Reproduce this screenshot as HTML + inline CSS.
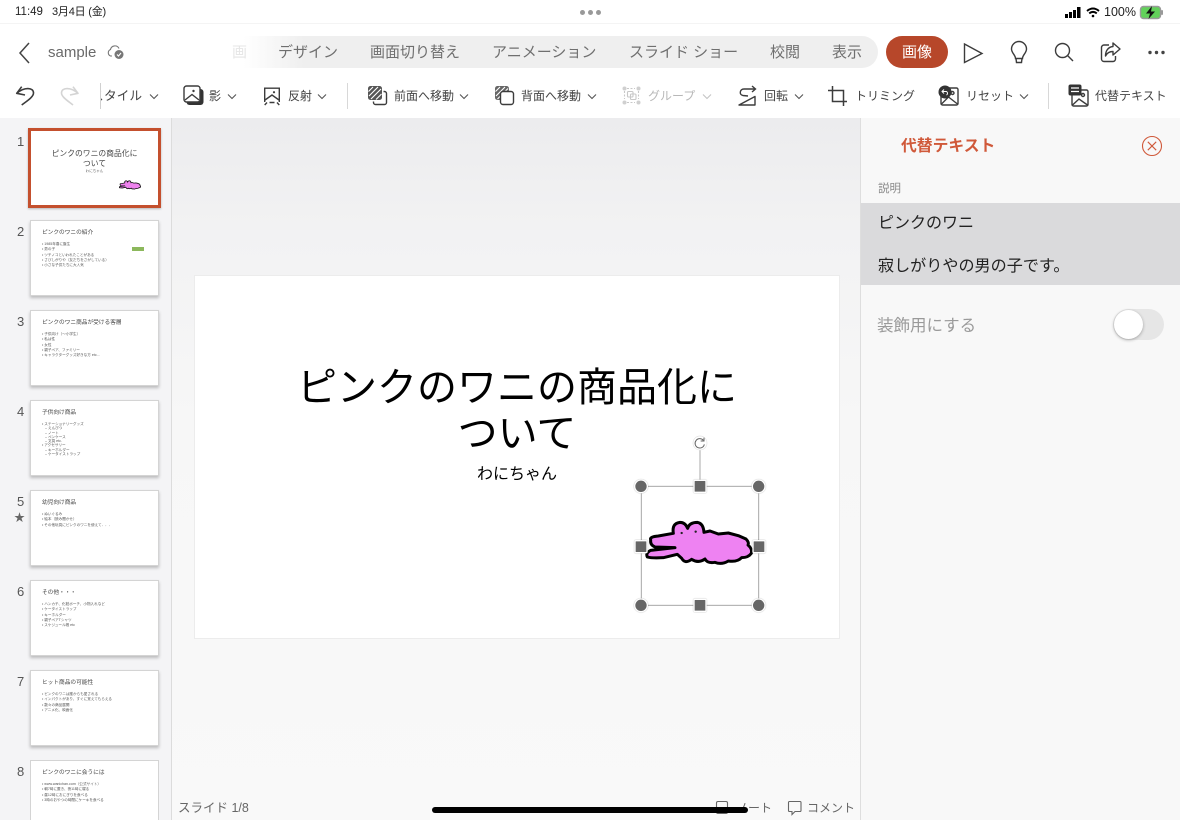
<!DOCTYPE html>
<html lang="ja"><head><meta charset="utf-8"><style>
*{box-sizing:border-box}
html,body{margin:0;padding:0;width:1180px;height:820px;overflow:hidden}
body{background:#fff;font-family:"Liberation Sans","Noto Sans CJK JP",sans-serif;color:#444}
#w{position:absolute;left:0;top:0;width:1180px;height:820px;overflow:hidden;background:#fff}
.t{position:absolute;white-space:nowrap;line-height:1}
.tab{font-size:15px;color:#6f6f6f;top:45px}
.tb{font-size:12px;color:#444;top:90px}
svg.i{position:absolute;overflow:visible;fill:none;stroke:#3c3c3c;stroke-width:1.4}
.th{position:absolute;left:31px;width:127px;height:74px;background:#fff;box-shadow:0 0 0 1px #d4d4d4,0 2px 3px 1px rgba(0,0,0,.24)}
.n{position:absolute;left:17px;font-size:13px;color:#555}
.th b{position:absolute;left:11px;top:10px;font-weight:400;font-size:5.7px;color:#444;white-space:nowrap;line-height:1}
.th div{position:absolute;left:11px;top:21px;font-size:3.6px;line-height:5.3px;color:#555;white-space:nowrap}
</style></head><body><div id="w">
<!-- status bar -->
<div class="t" style="left:15px;top:7px;font-size:11.5px;color:#222">11:49</div>
<div class="t" style="left:52px;top:7px;font-size:11px;color:#222;letter-spacing:-.2px">3月4日 (金)</div>
<div style="position:absolute;left:580px;top:10px;width:5px;height:5px;border-radius:50%;background:#999"></div>
<div style="position:absolute;left:588px;top:10px;width:5px;height:5px;border-radius:50%;background:#999"></div>
<div style="position:absolute;left:596px;top:10px;width:5px;height:5px;border-radius:50%;background:#999"></div>
<svg class="i" style="left:1065px;top:7px;stroke:none;fill:#000" width="16" height="11"><rect x="0" y="7" width="3" height="4"/><rect x="4" y="5" width="3" height="6"/><rect x="8" y="3" width="3" height="8"/><rect x="12" y="0" width="3.500" height="11"/></svg>
<svg class="i" style="left:1086px;top:7px;stroke:#000;stroke-width:1.9" width="14" height="11"><path d="M1 4Q7-1 13 4M3.200 6.400Q7 3.400 10.800 6.400"/><circle cx="7" cy="9" r="1.300" fill="#000" stroke="none"/></svg>
<div class="t" style="left:1104px;top:6px;font-size:12.500px;color:#222">100%</div>
<svg class="i" style="left:1140px;top:6px;stroke:none" width="24" height="13"><rect x=".5" y=".5" width="20" height="12" rx="3" fill="#62d15a" stroke="#9a9a9a"/><rect x="21" y="4" width="2" height="5" rx="1" fill="#999"/><path d="M12 0L6 7.500H10L8.500 13L15 5.500H11Z" fill="#111"/></svg>
<div style="position:absolute;left:0;top:23px;width:1180px;height:1px;background:#f4f4f4"></div>

<!-- title row -->
<svg class="i" style="left:17px;top:42px;stroke:#444;stroke-width:1.500" width="14" height="22"><path d="M12 1L3 11L12 21"/></svg>
<div class="t" style="left:48px;top:45px;font-size:15px;color:#6a6a6a">sample</div>
<svg class="i" style="left:106px;top:44px;stroke:#777;stroke-width:1.100" width="20" height="17"><path d="M6 12H4.500A3.500 3.500 0 0 1 4.500 5.500A4.500 4.500 0 0 1 13 4.500"/><circle cx="13" cy="10.500" r="4.500" fill="#777" stroke="none"/><path d="M11 10.500L12.500 12L15 9" stroke="#fff"/></svg>
<div style="position:absolute;left:210px;top:36px;width:668px;height:32px;border-radius:16px;background:linear-gradient(90deg,#fff 0,#fff 5%,#efefef 14%,#efefef 100%)"></div>
<div class="t tab" style="left:232px;color:#e6e6e6">画</div>
<div class="t tab" style="left:278px">デザイン</div>
<div class="t tab" style="left:370px">画面切り替え</div>
<div class="t tab" style="left:492px">アニメーション</div>
<div class="t tab" style="left:629px">スライド ショー</div>
<div class="t tab" style="left:770px">校閲</div>
<div class="t tab" style="left:832px">表示</div>
<div style="position:absolute;left:886px;top:36px;width:62px;height:32px;border-radius:16px;background:#b7472a"></div>
<div class="t" style="left:902px;top:45px;font-size:15px;color:#fff">画像</div>
<svg class="i" style="left:960px;top:40px" width="26" height="26"><path d="M4.500 4L22 13.500L4.500 22.500Z"/></svg>
<svg class="i" style="left:1008px;top:41px" width="22" height="24"><path d="M7.500 17.500C7.500 14 3.500 12 3.500 8A7.500 7.500 0 0 1 18.500 8C18.500 12 14.500 14 14.500 17.500ZM8 17.500L8.500 21.500H13.500L14 17.500"/></svg>
<svg class="i" style="left:1054px;top:42px" width="20" height="20"><circle cx="8.500" cy="8.500" r="7"/><path d="M13.500 13.500L19 19"/></svg>
<svg class="i" style="left:1100px;top:41px" width="22" height="22"><path d="M9 4H4A2.500 2.500 0 0 0 1.500 6.500V18A2.500 2.500 0 0 0 4 20.500H13A2.500 2.500 0 0 0 15.500 18V15"/><path d="M13 2L20 8L13 14V10.500C9 10.500 7 12 5.500 15C5.500 10 8 6 13 5.500Z" stroke-linejoin="round"/></svg>
<svg class="i" style="left:1148px;top:50px;stroke:none;fill:#444" width="18" height="5"><circle cx="2" cy="2.500" r="1.700"/><circle cx="8.500" cy="2.500" r="1.700"/><circle cx="15" cy="2.500" r="1.700"/></svg>

<!-- toolbar -->
<svg class="i" style="left:14px;top:84px;stroke-width:1.600" width="22" height="24"><path d="M7.700 2.700L2.700 9.300L11 11M2.700 9.300C10 3 19.500 3 19.500 9C19.500 13 13 17 7.700 21" stroke-linejoin="round"/></svg>
<svg class="i" style="left:59px;top:84px;stroke:#d4d4d4;stroke-width:1.600" width="22" height="24"><path d="M14 2.700L19 9.300L11 11M19 9.300C12 3 2.500 3 2.500 9C2.500 13 9 17 14 21" stroke-linejoin="round"/></svg>
<div style="position:absolute;left:100px;top:83px;width:1px;height:26px;background:#d0d0d0"></div>
<div style="position:absolute;left:101px;top:88px;width:3px;height:16px;overflow:hidden"><div class="t" style="left:-10px;top:2px;font-size:12.700px;color:#444">ス</div></div>
<div class="t tb" style="left:104px;font-size:12.700px">タイル</div>
<svg class="i" style="left:149px;top:93px;stroke:#555;stroke-width:1.100" width="10" height="7"><path d="M1 1.500L5 5.500L9 1.500"/></svg>

<svg class="i" style="left:183px;top:85px" width="22" height="21"><rect x="3.500" y="4" width="17" height="16" rx="3" fill="#333" stroke="none"/><rect x="1" y="1" width="16" height="16" rx="2.500" fill="#fff"/><circle cx="10.500" cy="6" r="1.200" fill="#3c3c3c" stroke="none"/><path d="M2 15L9 9.500L16 15"/></svg>
<div class="t tb" style="left:209px">影</div>
<svg class="i" style="left:227px;top:93px;stroke:#555;stroke-width:1.100" width="10" height="7"><path d="M1 1.500L5 5.500L9 1.500"/></svg>

<svg class="i" style="left:264px;top:87px" width="16" height="19"><path d="M.700 15V1.200H15.300V15"/><circle cx="10" cy="5.200" r="1.100" fill="#3c3c3c" stroke="none"/><path d="M1 13L8 8L15 13M.700 18L3 15.500M15.300 18L13 15.500M5.500 15.500H10.500"/></svg>
<div class="t tb" style="left:288px">反射</div>
<svg class="i" style="left:317px;top:93px;stroke:#555;stroke-width:1.100" width="10" height="7"><path d="M1 1.500L5 5.500L9 1.500"/></svg>
<div style="position:absolute;left:347px;top:83px;width:1px;height:26px;background:#d8d8d8"></div>

<svg class="i" style="left:367px;top:85px" width="22" height="22"><rect x="1" y="1" width="14" height="14" rx="2.500" fill="#555" stroke="none"/><path d="M2 11L11 2M4 14L14 4M1.500 6.500L6 2M9 14.500L14.500 9" stroke="#fff" stroke-width="1.100"/><path d="M16.500 6.500H17.500A2 2 0 0 1 19.500 8.500V17.500A2 2 0 0 1 17.500 19.500H8.500A2 2 0 0 1 6.500 17.500V16.500"/></svg>
<div class="t tb" style="left:394px">前面へ移動</div>
<svg class="i" style="left:459px;top:93px;stroke:#555;stroke-width:1.100" width="10" height="7"><path d="M1 1.500L5 5.500L9 1.500"/></svg>

<svg class="i" style="left:494px;top:85px" width="22" height="22"><rect x="1" y="1" width="14" height="14" rx="2.500" fill="#666" stroke="none"/><path d="M2 11L11 2M3.500 14L14 3.500M1.500 6.500L6 2" stroke="#fff" stroke-width="1.100"/><rect x="6.500" y="6.500" width="13" height="13" rx="2.500" fill="#fff"/></svg>
<div class="t tb" style="left:521px">背面へ移動</div>
<svg class="i" style="left:587px;top:93px;stroke:#555;stroke-width:1.100" width="10" height="7"><path d="M1 1.500L5 5.500L9 1.500"/></svg>

<svg class="i" style="left:622px;top:86px;stroke:#c8c8c8;stroke-width:1.100" width="19" height="19"><path d="M5 2.500H13M5 16.500H13M2.500 5V13M16.500 5V13" stroke-dasharray="2 1.500"/><rect x="5.500" y="5.500" width="5.500" height="5.500" rx="1"/><rect x="8.500" y="8" width="5.500" height="5.500" rx="1"/><g fill="#d0d0d0" stroke="none"><circle cx="2.500" cy="2.500" r="2"/><circle cx="16.500" cy="2.500" r="2"/><circle cx="2.500" cy="16.500" r="2"/><circle cx="16.500" cy="16.500" r="2"/></g></svg>
<div class="t tb" style="left:648px;color:#b8b8b8">グループ</div>
<svg class="i" style="left:702px;top:93px;stroke:#c4c4c4;stroke-width:1.100" width="10" height="7"><path d="M1 1.500L5 5.500L9 1.500"/></svg>

<svg class="i" style="left:738px;top:85px;stroke-width:1.400" width="19" height="21"><path d="M14 1L17.500 4L14 7M17 4H6C1.500 4 1 10 5 10.500L10 11"/><path d="M1 20H17V11.500Z" stroke-linejoin="round"/></svg>
<div class="t tb" style="left:764px">回転</div>
<svg class="i" style="left:794px;top:93px;stroke:#555;stroke-width:1.100" width="10" height="7"><path d="M1 1.500L5 5.500L9 1.500"/></svg>

<svg class="i" style="left:828px;top:86px;stroke-width:1.500" width="19" height="20"><path d="M4.500 0V15.500H19M0 4.500H15.500V20"/></svg>
<div class="t tb" style="left:855px">トリミング</div>

<svg class="i" style="left:938px;top:85px" width="22" height="22"><rect x="3" y="3" width="17" height="17" rx="1.500"/><circle cx="14.500" cy="8" r="1.500"/><path d="M3.500 19L10.500 12L19.500 19"/><circle cx="7" cy="7" r="6.500" fill="#333" stroke="none"/><path d="M4 6.500H8.500A2 2 0 0 1 8.500 10M6 4.500L4 6.500L6 8.500" stroke="#fff" stroke-width="1"/></svg>
<div class="t tb" style="left:966px">リセット</div>
<svg class="i" style="left:1019px;top:93px;stroke:#555;stroke-width:1.100" width="10" height="7"><path d="M1 1.500L5 5.500L9 1.500"/></svg>
<div style="position:absolute;left:1048px;top:83px;width:1px;height:26px;background:#d8d8d8"></div>

<svg class="i" style="left:1068px;top:84px" width="22" height="23"><rect x="4" y="6" width="16" height="16" rx="1.500"/><circle cx="15" cy="11" r="1.500"/><path d="M4.500 21L11 15L19.500 21"/><rect x="0.500" y="0.500" width="13" height="11" rx="2" fill="#333" stroke="none"/><path d="M3 4H11M3 7.500H11" stroke="#fff" stroke-width="1.300"/></svg>
<div class="t tb" style="left:1095px">代替テキスト</div>

<!-- left pane -->
<div style="position:absolute;left:0;top:118px;width:171px;height:702px;background:#f4f4f6"></div>
<div style="position:absolute;left:171px;top:118px;width:1px;height:702px;background:#dcdcdc"></div>
<div style="position:absolute;left:172px;top:118px;width:688px;height:702px;background:linear-gradient(#ececee 0,#f2f2f3 110px,#f7f7f7 300px,#f9f9f9 100%)"></div>
<div style="position:absolute;left:860px;top:118px;width:320px;height:702px;background:#f8f8f8;border-left:1px solid #dedede"></div>

<div class="n" style="top:134px">1</div>
<div style="position:absolute;left:28px;top:128px;width:133px;height:80px;background:#fff;border:3px solid #c4502e;box-shadow:0 1px 2px rgba(0,0,0,.25)"></div>
<div class="t" style="left:31px;width:127px;text-align:center;top:149px;font-size:7.800px;line-height:10px;color:#444;white-space:normal">ピンクのワニの商品化に<br>ついて</div>
<div class="t" style="left:31px;width:127px;text-align:center;top:170px;font-size:3.500px;color:#666">わにちゃん</div>
<svg style="position:absolute;left:119px;top:179px" width="22" height="12" viewBox="75 285 325 140"><path d="M92 345Q88 335 115 333L160 325Q155 295 180 292Q196 292 203 310Q208 292 232 292Q250 295 252 322L270 318L295 327L325 324L355 332L378 342Q388 352 384 360Q398 372 394 385Q385 398 365 398Q352 412 325 408Q305 420 285 412Q262 416 255 402Q235 416 215 403Q195 418 185 400L172 388L130 398Q95 400 82 396Q76 384 92 376L165 368L105 366Q90 360 92 345Z" fill="#ee82ee" stroke="#111" stroke-width="12"/></svg>

<div class="n" style="top:224px">2</div>
<div class="th" style="top:221px"><b>ピンクのワニの紹介</b><div>• 1985年春に誕生<br>• 男の子<br>• ツチノコといわれたことがある<br>• さびしがりや（友だちをさがしている）<br>• 小さな子供たちに大人気</div><span style="position:absolute;left:101px;top:26px;width:12px;height:4px;background:#8cb85c"></span></div>

<div class="n" style="top:314px">3</div>
<div class="th" style="top:311px"><b>ピンクのワニ商品が受ける客層</b><div>• 子供向け（〜小学生）<br>• 私は性<br>• 女性<br>• 親子ペア、ファミリー<br>• キャラクターグッズ好きな方 etc...</div></div>

<div class="n" style="top:404px">4</div>
<div class="th" style="top:401px"><b>子供向け商品</b><div style="line-height:4.300px">• ステーショナリーグッズ<br>&nbsp;&nbsp;&nbsp;– えんぴつ<br>&nbsp;&nbsp;&nbsp;– ノート<br>&nbsp;&nbsp;&nbsp;– ペンケース<br>&nbsp;&nbsp;&nbsp;– 文具 etc.<br>• アクセサリー<br>&nbsp;&nbsp;&nbsp;– キーホルダー<br>&nbsp;&nbsp;&nbsp;– ケータイストラップ</div></div>

<div class="n" style="top:494px">5</div>
<div class="t" style="left:14px;top:513px;font-size:11px;color:#666">★</div>
<div class="th" style="top:491px"><b>幼児向け商品</b><div>• ぬいぐるみ<br>• 絵本（読み聞かせ）<br>• その他玩具にピンクのワニを使えて．．．</div></div>

<div class="n" style="top:584px">6</div>
<div class="th" style="top:581px"><b>その他・・・</b><div>• ハンカチ、化粧ポーチ、小物入れなど<br>• ケータイストラップ<br>• キーホルダー<br>• 親子ペアTシャツ<br>• スケジュール帳 etc</div></div>

<div class="n" style="top:674px">7</div>
<div class="th" style="top:671px"><b>ヒット商品の可能性</b><div>• ピンクのワニは誰からも愛される<br>• インパクトがあり、すぐに覚えてもらえる<br>• 数々の商品展開<br>• アニメ化、映画化</div></div>

<div class="n" style="top:764px">8</div>
<div class="th" style="top:761px;height:59px;box-shadow:0 0 0 1px #d4d4d4;overflow:hidden"><b>ピンクのワニに会うには</b><div>• www.wanichan.com（公式サイト）<br>• 朝7時に置き、夜11時に寝る<br>• 昼12時におにぎりを食べる<br>• 3時のおやつの時間にケーキを食べる</div></div>

<!-- slide -->
<div style="position:absolute;left:195px;top:276px;width:644px;height:362px;background:#fff;box-shadow:0 0 0 1px #ececec"></div>
<div class="t" style="left:195px;width:644px;top:361px;text-align:center;font-size:40px;line-height:46px;color:#000;font-family:'Noto Sans CJK JP',sans-serif;white-space:normal">ピンクのワニの商品化に<br>ついて</div>
<div class="t" style="left:195px;width:644px;top:467px;text-align:center;font-size:16px;color:#000">わにちゃん</div>

<svg style="position:absolute;left:620px;top:425px" width="160" height="195" viewBox="0 0 480 585">
<g stroke="#a8a8a8" stroke-width="3" fill="none"><path d="M240 55V184"/><rect x="64" y="184" width="352" height="357"/></g>
<path d="M92 345Q88 335 115 333L160 325Q155 295 180 292Q196 292 203 310Q208 292 232 292Q250 295 252 322L270 318L295 327L325 324L355 332L378 342Q388 352 384 360Q398 372 394 385Q385 398 365 398Q352 412 325 408Q305 420 285 412Q262 416 255 402Q235 416 215 403Q195 418 185 400L172 388L130 398Q95 400 82 396Q76 384 92 376L165 368L105 366Q90 360 92 345Z" fill="#ee82f2" stroke="#000" stroke-width="9" stroke-linejoin="round"/>
<circle cx="185" cy="324" r="3.500" fill="#222"/><circle cx="227" cy="320" r="3.500" fill="#222"/>
<g fill="#666" stroke="#fff" stroke-width="4" style="filter:drop-shadow(0 0 1.500px rgba(0,0,0,.35))">
<circle cx="63" cy="184" r="19"/><circle cx="416" cy="184" r="19"/><circle cx="63" cy="541" r="19"/><circle cx="416" cy="541" r="19"/>
<rect x="222" y="166" width="36" height="36" rx="3"/><rect x="222" y="523" width="36" height="36" rx="3"/><rect x="45" y="347" width="36" height="36" rx="3"/><rect x="399" y="347" width="36" height="36" rx="3"/></g>
<circle cx="240" cy="54" r="21" fill="#fff" stroke="#e2e2e2" stroke-width="2"/>
<path d="M250 46A14 14 0 1 0 253 58M252 38V48H242" fill="none" stroke="#666" stroke-width="3"/>
</svg>

<!-- bottom -->
<div class="t" style="left:178px;top:802px;font-size:12.500px;color:#666">スライド 1/8</div>
<svg class="i" style="left:716px;top:801px;stroke:#666;stroke-width:1.100" width="13" height="15"><rect x=".5" y=".5" width="11" height="12" rx="1.500"/></svg>
<div class="t" style="left:736px;top:802px;font-size:12px;color:#666">ノート</div>
<svg class="i" style="left:788px;top:801px;stroke:#666;stroke-width:1.100" width="14" height="15"><path d="M1.500.5H12A1 1 0 0 1 13 1.500V9.500A1 1 0 0 1 12 10.500H7L4 13.500V10.500H1.500A1 1 0 0 1 .5 9.500V1.500A1 1 0 0 1 1.500.5Z"/></svg>
<div class="t" style="left:807px;top:802px;font-size:12px;color:#666">コメント</div>
<div style="position:absolute;left:432px;top:807px;width:316px;height:6px;border-radius:3px;background:#000"></div>

<!-- right panel -->
<div class="t" style="left:901px;top:139px;font-size:15.800px;font-weight:700;color:#d0593a">代替テキスト</div>
<svg class="i" style="left:1142px;top:136px;stroke:#d0593a;stroke-width:1.100" width="20" height="20"><circle cx="10" cy="10" r="9.500"/><path d="M5.800 5.800L14.200 14.200M14.200 5.800L5.800 14.200"/></svg>
<div class="t" style="left:878px;top:184px;font-size:11.500px;color:#8a8a8a">説明</div>
<div style="position:absolute;left:861px;top:203px;width:319px;height:82px;background:#dadadc"></div>
<div class="t" style="left:878px;top:216px;font-size:16px;color:#222">ピンクのワニ</div>
<div class="t" style="left:878px;top:258px;font-size:16.100px;color:#222">寂しがりやの男の子です。</div>
<div class="t" style="left:877px;top:318px;font-size:16.500px;color:#9a9a9a">装飾用にする</div>
<div style="position:absolute;left:1113px;top:309px;width:51px;height:31px;border-radius:16px;background:#e6e6e6"></div>
<div style="position:absolute;left:1114px;top:310px;width:29px;height:29px;border-radius:50%;background:#fff;box-shadow:0 1px 3px rgba(0,0,0,.3)"></div>
</div></body></html>
